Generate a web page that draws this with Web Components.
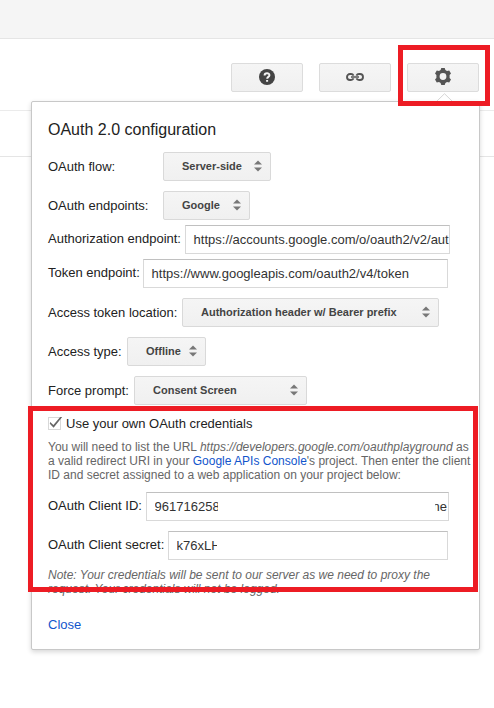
<!DOCTYPE html>
<html lang="en">
<head>
<meta charset="utf-8">
<title>OAuth 2.0 configuration</title>
<style>
html,body{margin:0;height:708px;overflow:hidden;background:#fff;font-family:"Liberation Sans",Arial,sans-serif;font-size:13px;color:#222}
</style>
</head>
<body>
<playground-page></playground-page>
<script>
function define(name, html) {
  const t = document.createElement('template');
  t.innerHTML = html;
  customElements.define(name, class extends HTMLElement {
    constructor() {
      super();
      this.attachShadow({mode: 'open'}).appendChild(t.content.cloneNode(true));
    }
  });
}

define('tool-button', `<style>
:host{display:flex;box-sizing:border-box;width:72px;height:29px;align-items:center;justify-content:center;border:1px solid #dcdcdc;border-radius:2px;background:linear-gradient(#f5f5f5,#f0f0f0)}
</style><slot></slot>`);

define('select-button', `<style>
:host{display:flex;flex:none;box-sizing:border-box;height:29px;align-items:center;justify-content:space-between;border:1px solid #d9d9d9;border-radius:2px;background:linear-gradient(#f5f5f5,#f0f0f0);padding:0 8px 1px 18px;font-weight:bold;font-size:11px;color:#444;white-space:nowrap}
svg{flex:none}
</style><span><slot></slot></span><svg width="8" height="12"><path d="M4 .5 8 4.6H0ZM0 7.4H8L4 11.5Z" fill="#777"/></svg>`);

define('text-box', `<style>
:host{display:flex;flex:none;box-sizing:border-box;height:29px;align-items:center;border:1px solid #d9d9d9;border-top-color:#c0c0c0;background:#fff;padding:0 1px 0 7.6px;color:#333;white-space:nowrap}
</style><slot></slot>`);

define('form-row', `<style>
:host{display:flex;height:29px;align-items:center;margin-bottom:10px}
.l{flex:none;width:var(--label);white-space:nowrap;padding-bottom:var(--lift,0)}
</style><span class="l"><slot name="label"></slot></span><slot></slot>`);

define('check-line', `<style>
:host{display:flex;height:15px;align-items:center;gap:5px}
svg{flex:none;overflow:visible}
</style><svg width="13" height="13"><rect x=".5" y=".5" width="12" height="12" fill="#fff" stroke="#d8d8d8"/><path d="M2.2 5 5.4 8 12.2 0 14.2 0 5.6 10.7 1.8 6.8Z" fill="#666"/></svg><span><slot></slot></span>`);

define('red-frame', `<style>
:host{display:block;position:absolute;box-sizing:border-box;border:5px solid #ed1c24;pointer-events:none}
</style>`);

define('config-panel', `<style>
:host{display:block;position:absolute;left:31px;top:101px;width:449px;height:549px;box-sizing:border-box;background:#fff;border:1px solid #c8c8c8;border-radius:2px;box-shadow:0 2px 5px rgba(0,0,0,.16);padding:19px 0 0 16px}
h2{margin:0 0 13px;font-weight:normal;font-size:16px;line-height:18px}
.tight{margin-bottom:5px}
.up{--lift:2px}
p{margin:0;font-size:12px;line-height:14px;color:#666;white-space:nowrap}
.help{margin:9px 0 10px}
.link{color:#15c}
.cut{overflow:hidden;flex:none}
.rest{flex:1}
.note{font-style:italic}
.close{margin-top:21px;color:#15c;line-height:16px}
check-line{margin-top:11px}
.arrow{position:absolute;left:404px;top:-9px}
</style>
<svg class="arrow" width="17" height="9"><path d="M0 9 8.5.7 17 9" fill="#fff" stroke="#d5d5d5"/></svg>
<h2>OAuth 2.0 configuration</h2>
<form-row style="--label:115px"><span slot="label">OAuth flow:</span><select-button style="width:108px">Server-side</select-button></form-row>
<form-row class="tight" style="--label:115px"><span slot="label">OAuth endpoints:</span><select-button style="width:87px">Google</select-button></form-row>
<form-row class="tight up" style="--label:137px"><span slot="label">Authorization endpoint:</span><text-box style="width:265px">https://accounts.google.com/o/oauth2/v2/aut</text-box></form-row>
<form-row class="up" style="--label:95px"><span slot="label">Token endpoint:</span><text-box style="width:305px">https://www.googleapis.com/oauth2/v4/token</text-box></form-row>
<form-row style="--label:134px"><span slot="label">Access token location:</span><select-button style="width:257px">Authorization header w/ Bearer prefix</select-button></form-row>
<form-row style="--label:79px"><span slot="label">Access type:</span><select-button style="width:79px">Offline</select-button></form-row>
<form-row style="--label:86px"><span slot="label">Force prompt:</span><select-button style="width:173px">Consent Screen</select-button></form-row>
<check-line>Use your own OAuth credentials</check-line>
<p class="help">You will need to list the URL <i>https://developers.google.com/oauthplayground</i> as<br>a valid redirect URI in your <span class="link">Google APIs Console</span>'s project. Then enter the client<br>ID and secret assigned to a web application on your project below:</p>
<form-row class="up" style="--label:98px"><span slot="label">OAuth Client ID:</span><text-box style="width:303px"><span class="cut" style="width:63px">961716258</span><span class="rest"></span><span class="cut" style="width:12px;display:flex;justify-content:flex-end">ne</span></text-box></form-row>
<form-row class="up" style="--label:120px;margin-bottom:8px"><span slot="label">OAuth Client secret:</span><text-box style="width:280px"><span class="cut" style="width:40px">k76xLH</span></text-box></form-row>
<p class="note">Note: Your credentials will be sent to our server as we need to proxy the<br>request. Your credentials will not be logged.</p>
<div class="close">Close</div>`);

define('playground-page', `<style>
:host{display:block;position:relative;width:494px;height:708px;overflow:hidden}
header{height:38px;background:#f5f5f5;border-bottom:1px solid #e5e5e5}
.bar{display:flex;box-sizing:border-box;height:72px;justify-content:flex-end;gap:16px;padding:24px 15px 0 0;border-bottom:1px solid #ebebeb}
.strip{height:45px;border-bottom:1px solid #e5e5e5}
tool-button svg{margin-bottom:2px}
</style>
<header></header>
<div class="bar">
<tool-button><svg width="16" height="16"><circle cx="8" cy="8" r="8" fill="#444"/><path d="M5.6 6.4C5.6 3.5 10.5 3.5 10.4 6.2 10.4 8 8.2 7.8 8.2 9.7M8.1 10.9V12.8" fill="none" stroke="#f3f3f3" stroke-width="2"/></svg></tool-button>
<tool-button><svg width="18" height="8"><path d="M7.6 2.6C7 1.4 6.2 1 5 1H4a3 3 0 0 0 0 6H5C6.2 7 7 6.6 7.6 5.4M10.4 2.6C11 1.4 11.8 1 13 1H14a3 3 0 0 1 0 6H13C11.8 7 11 6.6 10.4 5.4" fill="none" stroke="#555" stroke-width="1.9"/><path d="M5 4H13" stroke="#555" stroke-width="1.5"/></svg></tool-button>
<tool-button><svg width="16" height="17" viewBox="0 0 16 17"><path fill="#555" fill-rule="evenodd" d="M6.3 0H9.7L10.4 2 12 2.9 14.2 2.4 16 5.4 14.6 7.1V9.9L16 11.6 14.2 14.6 12 14.1 10.4 15 9.7 17H6.3L5.6 15 4 14.1 1.8 14.6 0 11.6 1.4 9.9V7.1L0 5.4 1.8 2.4 4 2.9 5.6 2ZM8 5.1a3.4 3.4 0 1 0 0 6.8 3.4 3.4 0 0 0 0-6.8Z"/></svg></tool-button>
</div>
<div class="strip"></div>
<config-panel></config-panel>
<red-frame style="left:398px;top:45px;width:92px;height:61px"></red-frame>
<red-frame style="left:28px;top:406px;width:450px;height:186px"></red-frame>`);
</script>
</body>
</html>
